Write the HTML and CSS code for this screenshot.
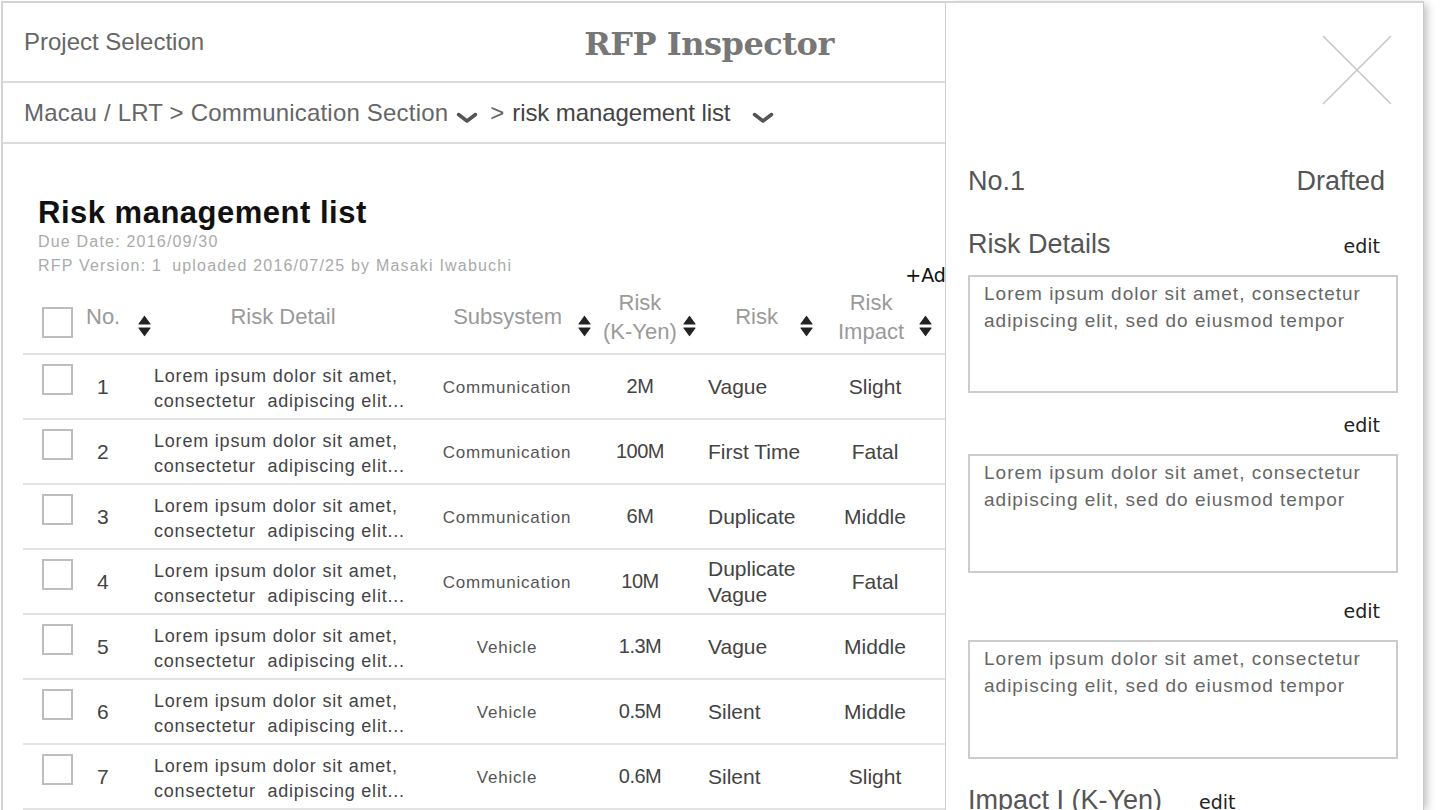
FILE: index.html
```html
<!DOCTYPE html>
<html lang="en">
<head>
<meta charset="utf-8">
<title>RFP Inspector</title>
<link rel="stylesheet" href="styles.css">
</head>
<body>
<div class="app">
  <header class="topbar">
    <div class="project">Project Selection</div>
    <div class="brand">RFP Inspector</div>
    <div></div>
  </header>
  <nav class="crumbs">
    <span class="path">Macau / LRT &gt; Communication Section</span>
    <svg class="chev chev-1" width="22" height="12" viewBox="0 0 22 12"><path d="M2.5 2.5 L11 9 L19.5 2.5" fill="none" stroke="#555" stroke-width="3.5" stroke-linecap="round" stroke-linejoin="round"/></svg>
    <span class="sep">&gt;</span>
    <span class="current">risk management list</span>
    <svg class="chev chev-2" width="22" height="12" viewBox="0 0 22 12"><path d="M2.5 2.5 L11 9 L19.5 2.5" fill="none" stroke="#555" stroke-width="3.5" stroke-linecap="round" stroke-linejoin="round"/></svg>
  </nav>
  <main class="content">
    <section class="titlebar">
      <div class="titles">
        <h1>Risk management list</h1>
        <p class="meta">Due Date: 2016/09/30</p>
        <p class="meta">RFP Version: 1<span class="sp-wide"></span>uploaded 2016/07/25 by Masaki Iwabuchi</p>
      </div>
      <button class="add">+Add</button>
    </section>
    <div class="table">
      <div class="trow thead">
        <div class="th th-check"><span class="cb"></span></div>
        <div class="th th-no"><span class="lbl">No.</span><svg class="sort" viewBox="0 0 13 22"><path d="M6.5 1.5 L12 9 H1 Z M1 13 H12 L6.5 20.5 Z" fill="#222" stroke="#222" stroke-width="1.2" stroke-linejoin="round"/></svg></div>
        <div class="th th-detail"><span class="lbl">Risk Detail</span></div>
        <div class="th th-sub"><span class="lbl">Subsystem</span><svg class="sort" viewBox="0 0 13 22"><path d="M6.5 1.5 L12 9 H1 Z M1 13 H12 L6.5 20.5 Z" fill="#222" stroke="#222" stroke-width="1.2" stroke-linejoin="round"/></svg></div>
        <div class="th th-cost"><span class="lbl two">Risk<br>(K-Yen)</span><svg class="sort" viewBox="0 0 13 22"><path d="M6.5 1.5 L12 9 H1 Z M1 13 H12 L6.5 20.5 Z" fill="#222" stroke="#222" stroke-width="1.2" stroke-linejoin="round"/></svg></div>
        <div class="th th-risk"><span class="lbl">Risk</span><svg class="sort" viewBox="0 0 13 22"><path d="M6.5 1.5 L12 9 H1 Z M1 13 H12 L6.5 20.5 Z" fill="#222" stroke="#222" stroke-width="1.2" stroke-linejoin="round"/></svg></div>
        <div class="th th-impact"><span class="lbl two">Risk<br>Impact</span><svg class="sort" viewBox="0 0 13 22"><path d="M6.5 1.5 L12 9 H1 Z M1 13 H12 L6.5 20.5 Z" fill="#222" stroke="#222" stroke-width="1.2" stroke-linejoin="round"/></svg></div>
      </div>

      <div class="trow row">
        <div class="td-check"><span class="cb"></span></div>
        <div class="td-no">1</div>
        <div class="td-detail">Lorem ipsum dolor sit amet,<br>consectetur&nbsp; adipiscing elit...</div>
        <div class="td-sub">Communication</div>
        <div class="td-cost">2M</div>
        <div class="td-risk">Vague</div>
        <div class="td-impact">Slight</div>
      </div>
      <div class="trow row">
        <div class="td-check"><span class="cb"></span></div>
        <div class="td-no">2</div>
        <div class="td-detail">Lorem ipsum dolor sit amet,<br>consectetur&nbsp; adipiscing elit...</div>
        <div class="td-sub">Communication</div>
        <div class="td-cost">100M</div>
        <div class="td-risk">First Time</div>
        <div class="td-impact">Fatal</div>
      </div>
      <div class="trow row">
        <div class="td-check"><span class="cb"></span></div>
        <div class="td-no">3</div>
        <div class="td-detail">Lorem ipsum dolor sit amet,<br>consectetur&nbsp; adipiscing elit...</div>
        <div class="td-sub">Communication</div>
        <div class="td-cost">6M</div>
        <div class="td-risk">Duplicate</div>
        <div class="td-impact">Middle</div>
      </div>
      <div class="trow row">
        <div class="td-check"><span class="cb"></span></div>
        <div class="td-no">4</div>
        <div class="td-detail">Lorem ipsum dolor sit amet,<br>consectetur&nbsp; adipiscing elit...</div>
        <div class="td-sub">Communication</div>
        <div class="td-cost">10M</div>
        <div class="td-risk">Duplicate<br>Vague</div>
        <div class="td-impact">Fatal</div>
      </div>
      <div class="trow row">
        <div class="td-check"><span class="cb"></span></div>
        <div class="td-no">5</div>
        <div class="td-detail">Lorem ipsum dolor sit amet,<br>consectetur&nbsp; adipiscing elit...</div>
        <div class="td-sub">Vehicle</div>
        <div class="td-cost">1.3M</div>
        <div class="td-risk">Vague</div>
        <div class="td-impact">Middle</div>
      </div>
      <div class="trow row">
        <div class="td-check"><span class="cb"></span></div>
        <div class="td-no">6</div>
        <div class="td-detail">Lorem ipsum dolor sit amet,<br>consectetur&nbsp; adipiscing elit...</div>
        <div class="td-sub">Vehicle</div>
        <div class="td-cost">0.5M</div>
        <div class="td-risk">Silent</div>
        <div class="td-impact">Middle</div>
      </div>
      <div class="trow row">
        <div class="td-check"><span class="cb"></span></div>
        <div class="td-no">7</div>
        <div class="td-detail">Lorem ipsum dolor sit amet,<br>consectetur&nbsp; adipiscing elit...</div>
        <div class="td-sub">Vehicle</div>
        <div class="td-cost">0.6M</div>
        <div class="td-risk">Silent</div>
        <div class="td-impact">Slight</div>
      </div>
    </div>
  </main>

  <aside class="drawer">
    <div class="drawer-top">
      <svg class="close" width="70" height="70" viewBox="0 0 70 70"><path d="M1 1 L69 69 M69 1 L1 69" stroke="#c6c6c6" stroke-width="1.5" fill="none"/></svg>
    </div>
    <div class="status"><span>No.1</span><span>Drafted</span></div>
    <div class="field-head first"><span class="field-label">Risk Details</span><span class="edit">edit</span></div>
    <div class="textbox">Lorem ipsum dolor sit amet, consectetur adipiscing elit, sed do eiusmod tempor</div>
    <div class="field-head solo gap-a"><span class="edit">edit</span></div>
    <div class="textbox tall">Lorem ipsum dolor sit amet, consectetur adipiscing elit, sed do eiusmod tempor</div>
    <div class="field-head solo gap-b"><span class="edit">edit</span></div>
    <div class="textbox tall">Lorem ipsum dolor sit amet, consectetur adipiscing elit, sed do eiusmod tempor</div>
    <div class="field-head last"><span class="field-label">Impact I (K-Yen)</span><span class="edit">edit</span></div>
  </aside>
</div>
</body>
</html>
```

FILE: styles.css
```css
* { box-sizing: border-box; }

html, body {
  margin: 0;
  background: #fff;
  overflow: hidden;
}

body {
  padding: 1px 0 0 1px;
  font-family: "Liberation Sans", Arial, sans-serif;
  color: #555;
}

.app {
  position: relative;
  width: 1423px;
  height: 809px;
  border-top: 2px solid #d4d4d4;
  border-left: 2px solid #d4d4d4;
}

/* top bar */
.topbar {
  height: 80px;
  display: grid;
  grid-template-columns: 1fr auto 1fr;
  align-items: center;
  padding: 0 30px 0 21px;
  border-bottom: 2px solid #dcdcdc;
}

.project {
  font-size: 24px;
  color: #666;
}

.brand {
  font-family: "DejaVu Serif", "Liberation Serif", serif;
  font-weight: bold;
  font-size: 32px;
  letter-spacing: -0.5px;
  color: #777;
  padding-top: 4px;
}

/* breadcrumbs */
.crumbs {
  height: 61px;
  display: flex;
  align-items: center;
  padding-left: 21px;
  border-bottom: 2px solid #dcdcdc;
  font-size: 24px;
  color: #666;
}

.path { letter-spacing: 0.2px; }
.chev { flex: none; }
.chev-1 { margin-left: 8px; margin-top: 10px; }
.chev-2 { margin-left: 22px; margin-top: 10px; }
.sep { margin-left: 12px; }
.current {
  margin-left: 8px;
  color: #444;
  letter-spacing: -0.1px;
}

/* content */
.content {
  padding: 52px 0 0 20px;
}

.titlebar {
  width: 935px;
  display: flex;
  justify-content: space-between;
  align-items: flex-start;
}

.titles { padding-left: 15px; }

h1 {
  margin: 0;
  font-size: 31px;
  line-height: 34px;
  letter-spacing: 0.5px;
  font-weight: bold;
  color: #111;
}

.meta {
  margin: 0;
  font-size: 16px;
  line-height: 24px;
  letter-spacing: 1.2px;
  color: #aaa;
}

.sp-wide {
  display: inline-block;
  width: 10px;
}

.add {
  margin-top: 67px;
  padding: 0;
  border: 0;
  background: none;
  font-family: "DejaVu Sans", sans-serif;
  font-size: 19px;
  line-height: 24px;
  color: #111;
}

/* table */
.table { width: 939px; }

.trow {
  display: grid;
  grid-template-columns: 59px 72px 258px 190px 96px 120px 127px 1fr;
  border-bottom: 2px solid #e3e3e3;
}

.thead {
  height: 68px;
  align-items: start;
}

.th {
  display: flex;
  align-items: flex-start;
  font-size: 22px;
  color: #9a9a9a;
  white-space: nowrap;
}

.th .lbl {
  margin-top: 16px;
  line-height: 28px;
}

.th .lbl.two {
  margin-top: 1px;
  line-height: 29px;
  text-align: center;
}

.sort {
  flex: none;
  width: 13px;
  height: 22px;
  margin-top: 28px;
}

.cb {
  display: block;
  width: 31px;
  height: 31px;
  border: 2px solid #bdbdbd;
  background: #fff;
}

.th-check { padding: 20px 0 0 19px; }
.th-no { padding-left: 4px; gap: 18px; }
.th-detail { justify-content: center; }
.th-sub { justify-content: flex-end; padding-right: 11px; gap: 16px; }
.th-cost { padding-left: 1px; gap: 6px; }
.th-risk { justify-content: flex-end; padding-right: 5px; gap: 22px; }
.th-impact { padding-left: 20px; gap: 15px; }

.row {
  height: 65px;
  align-items: center;
  color: #444;
}

.td-check {
  align-self: start;
  padding: 9px 0 0 19px;
}

.td-no {
  padding-left: 15px;
  font-size: 21px;
}

.td-detail {
  font-size: 18px;
  line-height: 25px;
  letter-spacing: 0.8px;
  white-space: nowrap;
  padding-top: 4px;
}

.td-sub {
  text-align: center;
  font-size: 17px;
  letter-spacing: 0.8px;
  color: #555;
  padding-top: 2px;
}

.td-cost {
  text-align: center;
  padding-right: 20px;
  font-size: 20px;
  letter-spacing: -0.5px;
}

.td-risk {
  padding-left: 10px;
  font-size: 21px;
  line-height: 26px;
}

.td-impact {
  text-align: center;
  padding-right: 13px;
  font-size: 21px;
}

/* drawer */
.drawer {
  position: absolute;
  top: -2px;
  left: 942px;
  width: 479px;
  height: 812px;
  background: #fff;
  border-top: 2px solid #d4d4d4;
  border-left: 1px solid #cfcfcf;
  border-right: 1px solid #c8c8c8;
  box-shadow: 6px 0 8px -3px rgba(0, 0, 0, 0.25);
  padding: 0 25px 0 22px;
  overflow: hidden;
}

.drawer-top {
  display: flex;
  justify-content: flex-end;
  padding: 32px 6px 0 0;
}

.close { display: block; }

.status {
  display: flex;
  justify-content: space-between;
  margin-top: 60px;
  padding-right: 13px;
  font-size: 27px;
  line-height: 32px;
  color: #555;
}

.field-head {
  display: flex;
  justify-content: space-between;
  align-items: baseline;
  padding-right: 18px;
}

.field-head.first { margin-top: 31px; height: 32px; }
.field-head.solo { justify-content: flex-end; height: 28px; line-height: 28px; }
.field-head.gap-a { margin-top: 18px; }
.field-head.gap-b { margin-top: 24px; }
.field-head.last { margin-top: 25px; justify-content: flex-start; gap: 37px; }

.field-label {
  font-size: 27px;
  line-height: 32px;
  color: #555;
}

.edit {
  font-family: "DejaVu Sans", sans-serif;
  font-size: 19px;
  color: #222;
}

.textbox {
  margin-top: 15px;
  height: 118px;
  border: 2px solid #cccccc;
  padding: 3px 14px;
  font-size: 19px;
  line-height: 27px;
  letter-spacing: 1px;
  color: #666;
}

.textbox.tall { height: 119px; }
```
